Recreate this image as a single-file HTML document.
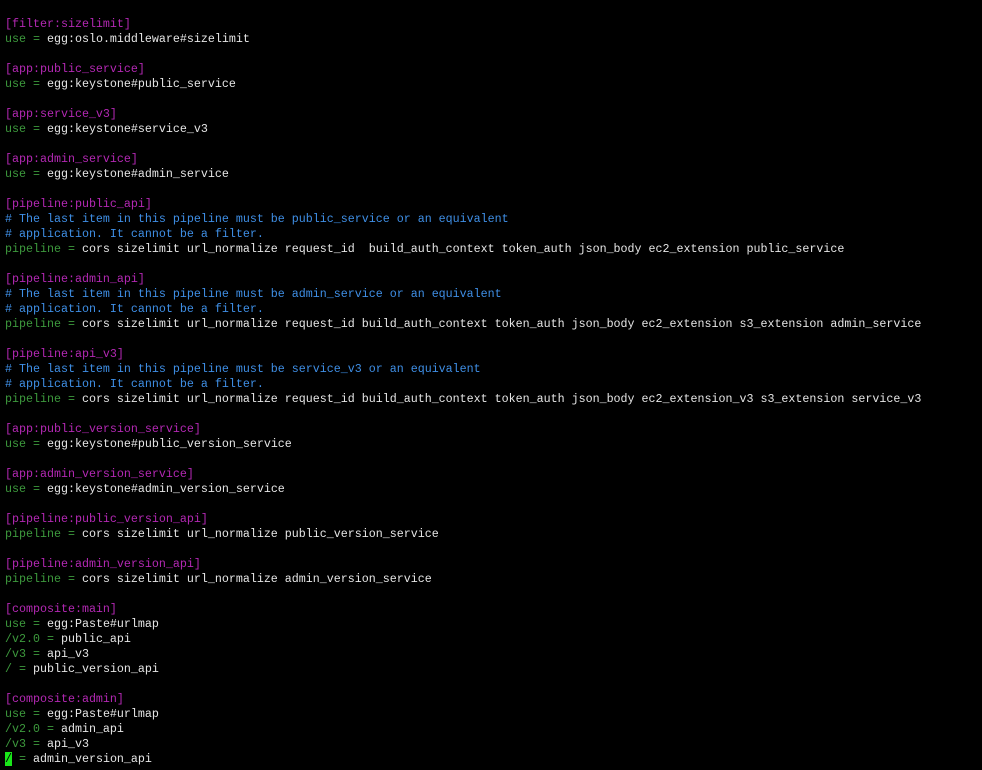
<!DOCTYPE html>
<html><head><style>
html,body{margin:0;padding:0;background:#000;width:982px;height:770px;overflow:hidden}
pre{margin:0;position:absolute;left:5px;top:2px;font-family:"Liberation Mono",monospace;font-size:11.67px;line-height:15px;color:#e6e6e6;letter-spacing:0}
.m{color:#b428b4}.g{color:#3d9a3d}.c{color:#3f8fe6}
.cur{background:#19e619;color:#000}
</style></head><body><pre> 
<span class="m">[filter:sizelimit]</span>
<span class="g">use =</span> egg:oslo.middleware#sizelimit

<span class="m">[app:public_service]</span>
<span class="g">use =</span> egg:keystone#public_service

<span class="m">[app:service_v3]</span>
<span class="g">use =</span> egg:keystone#service_v3

<span class="m">[app:admin_service]</span>
<span class="g">use =</span> egg:keystone#admin_service

<span class="m">[pipeline:public_api]</span>
<span class="c"># The last item in this pipeline must be public_service or an equivalent</span>
<span class="c"># application. It cannot be a filter.</span>
<span class="g">pipeline =</span> cors sizelimit url_normalize request_id  build_auth_context token_auth json_body ec2_extension public_service

<span class="m">[pipeline:admin_api]</span>
<span class="c"># The last item in this pipeline must be admin_service or an equivalent</span>
<span class="c"># application. It cannot be a filter.</span>
<span class="g">pipeline =</span> cors sizelimit url_normalize request_id build_auth_context token_auth json_body ec2_extension s3_extension admin_service

<span class="m">[pipeline:api_v3]</span>
<span class="c"># The last item in this pipeline must be service_v3 or an equivalent</span>
<span class="c"># application. It cannot be a filter.</span>
<span class="g">pipeline =</span> cors sizelimit url_normalize request_id build_auth_context token_auth json_body ec2_extension_v3 s3_extension service_v3

<span class="m">[app:public_version_service]</span>
<span class="g">use =</span> egg:keystone#public_version_service

<span class="m">[app:admin_version_service]</span>
<span class="g">use =</span> egg:keystone#admin_version_service

<span class="m">[pipeline:public_version_api]</span>
<span class="g">pipeline =</span> cors sizelimit url_normalize public_version_service

<span class="m">[pipeline:admin_version_api]</span>
<span class="g">pipeline =</span> cors sizelimit url_normalize admin_version_service

<span class="m">[composite:main]</span>
<span class="g">use =</span> egg:Paste#urlmap
<span class="g">/v2.0 =</span> public_api
<span class="g">/v3 =</span> api_v3
<span class="g">/ =</span> public_version_api

<span class="m">[composite:admin]</span>
<span class="g">use =</span> egg:Paste#urlmap
<span class="g">/v2.0 =</span> admin_api
<span class="g">/v3 =</span> api_v3
<span class="cur">/</span><span class="g"> =</span> admin_version_api</pre></body></html>
